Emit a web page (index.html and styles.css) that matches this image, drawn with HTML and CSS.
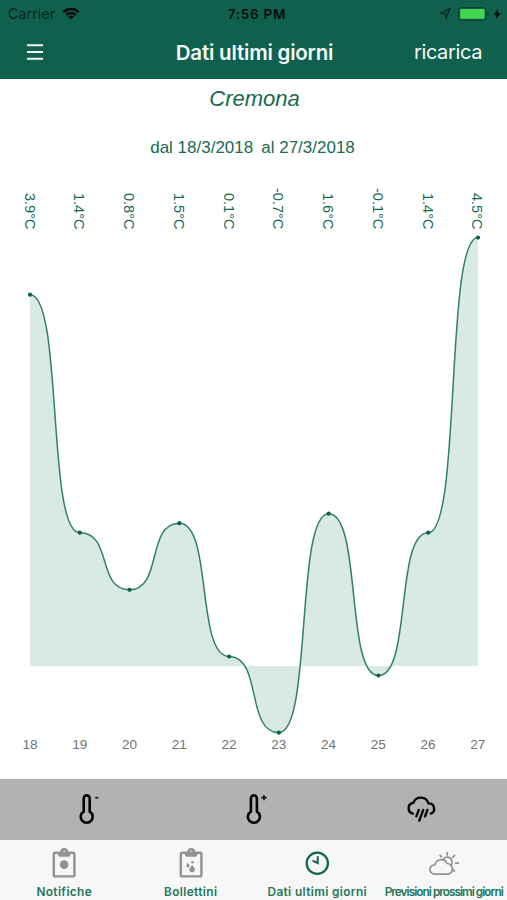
FILE: index.html
```html
<!DOCTYPE html>
<html lang="it">
<head>
<meta charset="utf-8">
<title>Dati ultimi giorni</title>
<link rel="stylesheet" href="styles.css">
</head>
<body>
<div class="app">
  <header class="header">
    <div class="status">
      <div class="status-left"><span class="carrier">Carrier</span>
        <svg class="wifi" viewBox="0 0 18 13"><g fill="none" stroke="#050b09" stroke-width="2.4"><path d="M1.3 5.1A11 11 0 0 1 16.7 5.1"/><path d="M4.1 8A7 7 0 0 1 13.9 8"/></g><path fill="#050b09" d="M6.2 9.8A4 4 0 0 1 11.8 9.8L9 12.6Z"/></svg>
      </div>
      <span class="time">7:56 PM</span>
      <svg class="power" viewBox="0 0 64 16"><path d="M0.3 7.2L10.2 2.3L6.2 12.3L5 8.2Z" fill="#082b22" fill-opacity=".35" stroke="#082b22" stroke-width="1.2"/><rect x="18.6" y="1.6" width="27.2" height="12.6" rx="2.5" fill="none" stroke="#0a3d30"/><rect x="20.2" y="3" width="24.4" height="9.8" rx="1" fill="#42d74e"/><path d="M47.3 6v4q1.5-.5 1.5-2t-1.5-2" fill="#0a3d30"/><path d="M58.3 2.5L53.6 8.8H56.4L55.7 13.2L60.8 6.9H57.6Z" fill="#050b09"/></svg>
    </div>
    <div class="navbar">
      <svg class="menu" viewBox="0 0 16 16"><path d="M0 1.2H16M0 8H16M0 14.8H16" stroke="#f4faf8" stroke-width="1.9"/></svg>
      <h1 class="nav-title">Dati ultimi giorni</h1>
      <span class="reload">ricarica</span>
    </div>
  </header>
  <main class="main">
    <h2 class="city">Cremona</h2>
    <p class="range"><span>dal 18/3/2018</span><span>al 27/3/2018</span></p>
    <div class="values">
      <span>3.9°C</span><span>1.4°C</span><span>0.8°C</span><span>1.5°C</span><span>0.1°C</span><span>-0.7°C</span><span>1.6°C</span><span>-0.1°C</span><span>1.4°C</span><span>4.5°C</span>
    </div>
    <svg class="chart" id="chart" viewBox="0 230 507 506"></svg>
    <div class="days">
      <span>18</span><span>19</span><span>20</span><span>21</span><span>22</span><span>23</span><span>24</span><span>25</span><span>26</span><span>27</span>
    </div>
  </main>
  <div class="toolbar">
    <svg class="tool" viewBox="0 0 40 40"><g fill="none" stroke="#050505" stroke-width="2.6"><path d="M18.7 21.6V8.4a3 3 0 0 1 6 0V21.6a6 6 0 1 1-6 0Z"/></g><path d="M30.2 7.7h3.2" stroke="#111" stroke-width="1.6"/></svg>
    <svg class="tool" viewBox="0 0 40 40"><g fill="none" stroke="#050505" stroke-width="2.6"><path d="M16.9 21.6V8.4a3 3 0 0 1 6 0V21.6a6 6 0 1 1-6 0Z"/></g><path d="M27.4 7.6h5.2M30 5v5.2" stroke="#111" stroke-width="1.6"/></svg>
    <svg class="tool" viewBox="0 0 40 40"><g fill="none" stroke="#050505" stroke-width="2.4" stroke-linecap="round"><path d="M9.9 23.6A5.5 5.5 0 0 1 10.4 12.8A7.9 7.9 0 0 1 25.4 13.4A5.3 5.3 0 0 1 27.8 23.6"/><path d="M15.7 20l-2.3 6.3M20.2 20l-3.9 10.7M24.4 20l-2.3 6.3"/></g></svg>
  </div>
  <nav class="tabs">
    <div class="tab"><svg class="tab-icon" viewBox="0 0 32 32"><g fill="none" stroke="#929292" stroke-width="2.4"><rect x="5.8" y="5.8" width="20.6" height="23.6" rx="1.5"/><path d="M13.4 5a2.8 2.8 0 0 1 5.6 0"/></g><path d="M10 5.5h12.3v2.2q0 2-2 2H12q-2 0-2-2Z" fill="#929292"/><circle cx="16.1" cy="17.6" r="4.3" fill="#929292"/></svg><span>Notifiche</span></div>
    <div class="tab"><svg class="tab-icon" viewBox="0 0 32 32"><g fill="none" stroke="#929292" stroke-width="2.4"><rect x="5.8" y="5.8" width="20.6" height="23.6" rx="1.5"/><path d="M13.4 5a2.8 2.8 0 0 1 5.6 0"/></g><path d="M10 5.5h12.3v2.2q0 2-2 2H12q-2 0-2-2ZM17.2 18l2.2 3.1a2.8 2.8 0 1 1-4.6 0ZM12.9 15.8l1.3 2a1.6 1.6 0 1 1-2.6 0Z" fill="#929292"/><circle cx="17.5" cy="15.2" r="1.3" fill="#929292"/></svg><span>Bollettini</span></div>
    <div class="tab"><svg class="tab-icon" viewBox="0 0 32 32"><g fill="none" stroke="#10664f" stroke-width="2.3"><circle cx="16.3" cy="16.2" r="10.6"/><path d="M16.7 9.3v6.9l-5.1-2.6" stroke-width="2"/></g></svg><span>Dati ultimi giorni</span></div>
    <div class="tab tight"><svg class="tab-icon" viewBox="0 0 32 32"><g fill="none" stroke="#929292" stroke-width="1.7"><path d="M6.6 27.2a4.7 4.7 0 0 1 .2-9.4A6.6 6.6 0 0 1 19.2 16.5A5.4 5.4 0 0 1 20 27.2Z"/><path d="M14.8 13.4A4.8 4.8 0 1 1 22.1 18.8M19.2 5V8.7M11.8 7.7L13.8 10.4M27 7.9L24.5 10.7M27.1 16.1H31.1M24.5 22.3L27 24.5"/></g></svg><span>Previsioni prossimi giorni</span></div>
  </nav>
</div>
<script src="chart.js"></script>
</body>
</html>
```
FILE: styles.css
```css
* { box-sizing: border-box; }
body { margin: 0; background: #fff; font-family: "Liberation Sans", Arial, sans-serif; }
.app { width: 507px; height: 900px; display: flex; flex-direction: column; overflow: hidden; }
.header { height: 79px; flex: none; background: #0f614e; font-family: Inter, sans-serif; }
.status { height: 27px; display: grid; grid-template-columns: 1fr auto 1fr; align-items: center; padding: 0 3px 0 8px; color: #050b09; font-size: 14px; }
.status-left { display: flex; align-items: center; gap: 7px; }
.carrier { color: #08241c; letter-spacing: .2px; }
.wifi { width: 18px; height: 13px; }
.time { font-weight: 600; font-size: 13.5px; letter-spacing: .75px; margin-left: 2px; }
.power { width: 64px; height: 16px; justify-self: end; }
.navbar { height: 50px; display: grid; grid-template-columns: 1fr auto 1fr; align-items: center; padding: 0 25px 0 27px; color: #f4faf8; }
.menu { width: 16px; height: 16px; }
.nav-title { margin: 0; font-size: 20.5px; font-weight: 600; letter-spacing: -.2px; }
.reload { justify-self: end; font-size: 20px; letter-spacing: -.38px; }
.main { height: 700px; flex: none; display: flex; flex-direction: column; color: #186b51; }
.city { margin: 0; height: 38px; line-height: 39px; padding-left: 2px; text-align: center; font-size: 22px; font-weight: 400; font-style: italic; }
.range { margin: 0; height: 62px; line-height: 61px; padding-right: 2px; display: flex; justify-content: center; gap: 8px; font-size: 17px; }
.values { height: 51px; display: grid; grid-template-columns: repeat(10, 49.75px); justify-content: center; font-size: 14.5px; }
.values span { writing-mode: vertical-rl; height: 50px; justify-self: center; text-align: right; line-height: 18px; }
.chart { width: 507px; height: 506px; flex: none; }
.area { fill: #d9e9e4; }
.line { fill: none; stroke: #33806a; stroke-width: 1.5; }
.dot { fill: #0b614b; }
.days { height: 18px; display: grid; grid-template-columns: repeat(10, 49.75px); justify-content: center; padding-left: 1px; color: #747474; font-size: 13.6px; line-height: 17px; text-align: center; }
.toolbar { height: 61px; flex: none; background: #b2b2b2; display: flex; justify-content: space-around; align-items: center; }
.tool { width: 40px; height: 40px; }
.tabs { height: 60px; flex: none; background: #f7f7f7; display: grid; grid-template-columns: repeat(4, 1fr); padding-left: 1px; font-family: Inter, sans-serif; font-size: 11.8px; font-weight: 600; color: #24765c; }
.tab { min-width: 0; display: flex; flex-direction: column; align-items: center; padding-top: 7px; white-space: nowrap; }
.tab-icon { width: 32px; height: 32px; flex: none; }
.tab span { line-height: 16px; margin-top: 5px; letter-spacing: .38px; }
.tight span { letter-spacing: -.97px; }
```
FILE: chart.js
```js
const temps = [3.9, 1.4, 0.8, 1.5, 0.1, -0.7, 1.6, -0.1, 1.4, 4.5];
const step = 49.78, left = 30, zero = 666, scale = 95.2;
const handle = step * 0.667;
const points = temps.map((t, i) => [left + i * step, zero - t * scale]);
let curve = `M${points[0]}`;
for (let i = 1; i < points.length; i++) {
  const [x0, y0] = points[i - 1];
  const [x1, y1] = points[i];
  curve += `C${x0 + handle} ${y0} ${x1 - handle} ${y1} ${x1} ${y1}`;
}
document.getElementById('chart').innerHTML =
  `<path class="area" d="${curve}V${zero}H${left}Z"/><path class="line" d="${curve}"/>` +
  points.map(([x, y]) => `<circle class="dot" cx="${x}" cy="${y}" r="2.1"/>`).join('');
```
